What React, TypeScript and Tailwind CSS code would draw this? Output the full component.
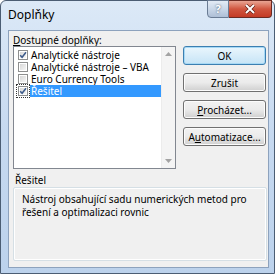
import React from "react";

function Check({ checked, focus }: { checked: boolean; focus?: boolean }) {
  return (
    <div className={"flex items-center justify-center w-[12px] h-[12px] " + (focus ? "outline outline-1 outline-dotted outline-[#333]" : "")}>
      <svg width="10" height="10" viewBox="0 0 10 10">
        <defs>
          <linearGradient id="cbg" x1="0" y1="0" x2="1" y2="1">
            <stop offset="0" stopColor="#d8d8d8" />
            <stop offset="1" stopColor="#f6f6f6" />
          </linearGradient>
        </defs>
        <rect x="0.5" y="0.5" width="9" height="9" fill="#fff" stroke="#8e8f8f" />
        <rect x="2" y="2" width="6" height="6" fill="url(#cbg)" />
        {checked && (
          <path d="M2.2 5.2 L4.1 7.3 L8 2.3" fill="none" stroke="#3c5a8a" strokeWidth="1.5" />
        )}
      </svg>
    </div>
  );
}

function Btn({ children, def }: { children: React.ReactNode; def?: boolean }) {
  return (
    <div
      className={
        "h-[19px] w-[83px] rounded-[3px] border flex items-center justify-center text-[10px] text-black " +
        (def
          ? "border-[#3c7fb1] bg-gradient-to-b from-[#eaf6fd] to-[#c6e4f6] shadow-[inset_0_0_0_1px_#a7d9f5]"
          : "border-[#707070] bg-gradient-to-b from-[#f2f2f2] via-[#ebebeb] to-[#cfcfcf] shadow-[inset_0_0_0_1px_#fcfcfc]")
      }
    >
      {children}
    </div>
  );
}

export default function App() {
  const items = [
    { t: "Analytické nástroje", c: true },
    { t: "Analytické nástroje – VBA", c: false },
    { t: "Euro Currency Tools", c: false },
    { t: "Řešitel", c: true, sel: true },
  ];
  return (
    <div className="w-[280px] h-[277px] bg-white" style={{ fontFamily: '"Noto Sans", "Open Sans", sans-serif' }}>
      <div className="relative w-[275px] h-[274px] rounded-t-[6px] border border-[#4b5d73] bg-gradient-to-b from-[#dce9f7] via-[#c6d9f0] to-[#bcd2ec] flex flex-col">
        <div className="h-[29px] pl-[7px] pt-[7px] text-[12px] text-black leading-[14px]">Doplňky</div>
        <div className="absolute top-[-1px] right-[2px] flex">
          <div className="w-[22px] h-[18px] rounded-bl-[4px] border border-[#6a7c94] bg-gradient-to-b from-[#e3ebf5] via-[#c9d7e8] to-[#aebfd6] flex items-center justify-center text-[11px] font-bold text-white [text-shadow:0_0_2px_#34495e]">
            ?
          </div>
          <div className="w-[43px] h-[18px] rounded-br-[4px] border border-l-0 border-[#6b2a22] bg-gradient-to-b from-[#e8a493] via-[#d0553f] to-[#c43b25] flex items-center justify-center">
            <svg width="12" height="10" viewBox="0 0 12 10">
              <path d="M2 1 L10 9 M10 1 L2 9" stroke="#5a1a10" strokeWidth="3.2" />
              <path d="M2 1 L10 9 M10 1 L2 9" stroke="#fff" strokeWidth="2" />
            </svg>
          </div>
        </div>
        <div className="ml-[7px] w-[261px] h-[238px] border border-[#8da2bd] bg-[#f0f0f0] flex flex-col text-[10px] text-black leading-[12px]">
          <div className="flex">
            <div className="flex flex-col pl-[4px]">
              <div className="h-[13px] pt-[3px] pl-[0px]">
                <span className="underline">D</span>ostupné doplňky:
              </div>
              <div className="mt-[2px] ml-[0px] w-[163px] h-[123px] border border-[#828790] bg-white flex">
                <div className="flex-1 pt-[2px] flex flex-col">
                  {items.map((it) => (
                    <div key={it.t} className="h-[12px] flex items-center">
                      <div className="w-[15px] flex justify-center pl-[2px]">
                        <Check checked={it.c} focus={it.sel} />
                      </div>
                      <div
                        className={
                          "flex-1 h-[12px] pl-[1px] ml-[1px] " +
                          (it.sel ? "bg-[#3399ff] text-white" : "")
                        }
                      >
                        {it.t}
                      </div>
                    </div>
                  ))}
                </div>
                <div className="w-[14px] bg-[#f4f4f4] border-l border-[#ececec] flex flex-col justify-between items-center py-[5px]">
                  <svg width="7" height="4" viewBox="0 0 7 4">
                    <path d="M0 4 L3.5 0 L7 4 Z" fill="#a3a3a3" />
                  </svg>
                  <svg width="7" height="4" viewBox="0 0 7 4">
                    <path d="M0 0 L3.5 4 L7 0 Z" fill="#a3a3a3" />
                  </svg>
                </div>
              </div>
            </div>
            <div className="ml-[7px] pt-[15px] flex flex-col gap-[8px]">
              <Btn def>OK</Btn>
              <Btn>Zrušit</Btn>
              <Btn>
                <span>
                  <span className="underline">P</span>rocházet...
                </span>
              </Btn>
              <Btn>
                <span>
                  A<span className="underline">u</span>tomatizace...
                </span>
              </Btn>
            </div>
          </div>
          <div className="mt-[5px] ml-[4px] w-[254px] relative">
            <div className="h-[13px] pl-[2px] leading-[13px]">Řešitel</div>
            <div className="mt-[0px] h-[74px] border border-[#d5dfe5] rounded-[2px] shadow-[inset_0_0_0_1px_#fff] pt-[5px] pl-[8px] pr-[6px] leading-[13px]">
              Nástroj obsahující sadu numerických metod pro
              <br />
              řešení a optimalizaci rovnic
            </div>
          </div>
        </div>
      </div>
    </div>
  );
}
